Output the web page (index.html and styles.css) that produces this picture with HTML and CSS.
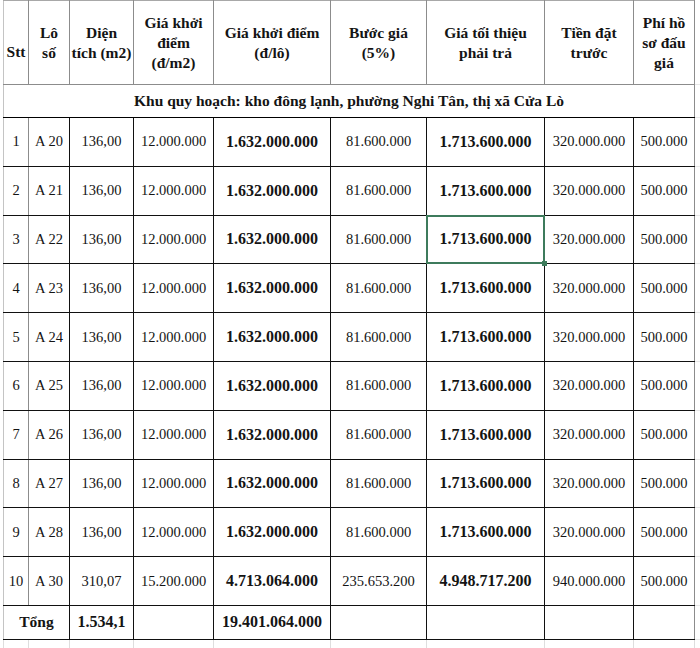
FILE: index.html
```html
<!DOCTYPE html>
<html lang="vi">
<head>
<meta charset="utf-8">
<title>Bảng giá đấu giá đất</title>
<link rel="stylesheet" href="styles.css">
</head>
<body>
<div class="sheet">
<table class="grid">
  <colgroup>
    <col class="c-stt"><col class="c-lo"><col class="c-dt"><col class="c-gm2"><col class="c-glo">
    <col class="c-buoc"><col class="c-min"><col class="c-coc"><col class="c-phi"><col class="c-gut">
  </colgroup>
  <thead>
    <tr class="r-head">
      <th class="stt-h">Stt</th>
      <th>Lô<br>số</th>
      <th>Diện<br>tích (m2)</th>
      <th>Giá khởi<br>điểm<br>(đ/m2)</th>
      <th>Giá khởi điểm<br>(đ/lô)</th>
      <th>Bước giá<br>(5%)</th>
      <th>Giá tối thiệu<br>phải trả</th>
      <th>Tiền đặt<br>trước</th>
      <th class="last">Phí hồ<br>sơ đấu<br>giá</th>
      <td class="gut"></td>
    </tr>
  </thead>
  <tbody>
    <tr class="r-khu">
      <td colspan="9" class="khu last">Khu quy hoạch: kho đông lạnh, phường Nghi Tân, thị xã Cửa Lò</td>
      <td class="gut"></td>
    </tr>
    <tr class="r-data"><td class="stt">1</td><td>A 20</td><td>136,00</td><td>12.000.000</td><td class="b">1.632.000.000</td><td>81.600.000</td><td class="b">1.713.600.000</td><td>320.000.000</td><td class="last">500.000</td><td class="gut"></td></tr>
    <tr class="r-data"><td class="stt">2</td><td>A 21</td><td>136,00</td><td>12.000.000</td><td class="b">1.632.000.000</td><td>81.600.000</td><td class="b">1.713.600.000</td><td>320.000.000</td><td class="last">500.000</td><td class="gut"></td></tr>
    <tr class="r-data"><td class="stt">3</td><td>A 22</td><td>136,00</td><td>12.000.000</td><td class="b">1.632.000.000</td><td>81.600.000</td><td class="b sel">1.713.600.000</td><td>320.000.000</td><td class="last">500.000</td><td class="gut"></td></tr>
    <tr class="r-data"><td class="stt">4</td><td>A 23</td><td>136,00</td><td>12.000.000</td><td class="b">1.632.000.000</td><td>81.600.000</td><td class="b">1.713.600.000</td><td>320.000.000</td><td class="last">500.000</td><td class="gut"></td></tr>
    <tr class="r-data"><td class="stt">5</td><td>A 24</td><td>136,00</td><td>12.000.000</td><td class="b">1.632.000.000</td><td>81.600.000</td><td class="b">1.713.600.000</td><td>320.000.000</td><td class="last">500.000</td><td class="gut"></td></tr>
    <tr class="r-data"><td class="stt">6</td><td>A 25</td><td>136,00</td><td>12.000.000</td><td class="b">1.632.000.000</td><td>81.600.000</td><td class="b">1.713.600.000</td><td>320.000.000</td><td class="last">500.000</td><td class="gut"></td></tr>
    <tr class="r-data"><td class="stt">7</td><td>A 26</td><td>136,00</td><td>12.000.000</td><td class="b">1.632.000.000</td><td>81.600.000</td><td class="b">1.713.600.000</td><td>320.000.000</td><td class="last">500.000</td><td class="gut"></td></tr>
    <tr class="r-data"><td class="stt">8</td><td>A 27</td><td>136,00</td><td>12.000.000</td><td class="b">1.632.000.000</td><td>81.600.000</td><td class="b">1.713.600.000</td><td>320.000.000</td><td class="last">500.000</td><td class="gut"></td></tr>
    <tr class="r-data"><td class="stt">9</td><td>A 28</td><td>136,00</td><td>12.000.000</td><td class="b">1.632.000.000</td><td>81.600.000</td><td class="b">1.713.600.000</td><td>320.000.000</td><td class="last">500.000</td><td class="gut"></td></tr>
    <tr class="r-data"><td class="stt">10</td><td>A 30</td><td>310,07</td><td>15.200.000</td><td class="b">4.713.064.000</td><td>235.653.200</td><td class="b">4.948.717.200</td><td>940.000.000</td><td class="last">500.000</td><td class="gut"></td></tr>
    <tr class="r-total">
      <td colspan="2" class="tong">Tổng</td>
      <td class="b">1.534,1</td>
      <td></td>
      <td class="b">19.401.064.000</td>
      <td></td><td></td><td></td><td class="last"></td>
      <td class="gut"></td>
    </tr>
    <tr class="r-below">
      <td class="lt"></td><td class="lt"></td><td class="lt"></td><td class="lt"></td><td class="lt"></td><td class="lt"></td><td class="lt"></td><td class="lt"></td><td class="lt"></td><td class="gut"></td>
    </tr>
  </tbody>
</table>
</div>
</body>
</html>
```

FILE: styles.css
```css
html, body {
  margin: 0;
  padding: 0;
  background: #ffffff;
}

.sheet {
  padding: 0 0 0 3px;
}

.grid {
  border-collapse: collapse;
  table-layout: fixed;
  width: 698px;
  font-family: "Liberation Serif", "Times New Roman", serif;
  color: #141414;
  font-size: 14.5px;
}

.c-stt { width: 25px; }
.c-lo { width: 41px; }
.c-dt { width: 64px; }
.c-gm2 { width: 80px; }
.c-glo { width: 117px; }
.c-buoc { width: 96px; }
.c-min { width: 118px; }
.c-coc { width: 89px; }
.c-phi { width: 61px; }
.c-gut { width: 7px; }

.grid th,
.grid td {
  padding: 0;
  text-align: center;
  vertical-align: middle;
  white-space: nowrap;
  overflow: visible;
}

/* header */
.r-head { height: 84px; }
.grid th {
  font-weight: bold;
  font-size: 15.5px;
  line-height: 20px;
  border: 1px solid #8c8c8c;
  border-top-color: #a8a8a8;
}
.grid th:first-child {
  border-left-color: #c4c4c4;
}
.grid th.stt-h {
  vertical-align: bottom;
  padding-bottom: 22px;
}

/* region row */
.r-khu { height: 33px; }
.khu {
  font-weight: bold;
  font-size: 15.5px;
  border: 1px solid #000;
  border-left-color: #c4c4c4;
}

/* data rows */
.r-data { height: 48.8px; }
.r-data td,
.r-total td {
  border: 1px solid #111;
}
.r-data td.stt {
  border-left-color: #c4c4c4;
  border-right-color: #8c8c8c;
}
.grid td.last,
.grid th.last {
  border-right-color: #8c8c8c;
}

.b {
  font-weight: bold;
  font-size: 16px;
}

/* total row */
.r-total { height: 34px; }
.r-total td.tong {
  font-weight: bold;
  font-size: 15.5px;
  border-left-color: #c4c4c4;
}

/* faint spreadsheet gridlines outside the table */
.r-below { height: 9px; }
.r-below td.lt {
  border-left: 1px solid #dedede;
  border-right: 1px solid #dedede;
}
.grid td.gut {
  border: none;
  border-right: 1px solid #dadada;
  border-bottom: 1px solid #e6e6e6;
}

/* Excel selection overlay */
.grid td.sel {
  position: relative;
}
.grid td.sel::after {
  content: "";
  position: absolute;
  left: -1px;
  top: -1px;
  right: -1px;
  bottom: -1px;
  border: 2px solid #3e7b5c;
}
.grid td.sel::before {
  content: "";
  position: absolute;
  right: -3px;
  bottom: -3px;
  width: 5px;
  height: 5px;
  background: #3e7b5c;
  z-index: 1;
}
```
